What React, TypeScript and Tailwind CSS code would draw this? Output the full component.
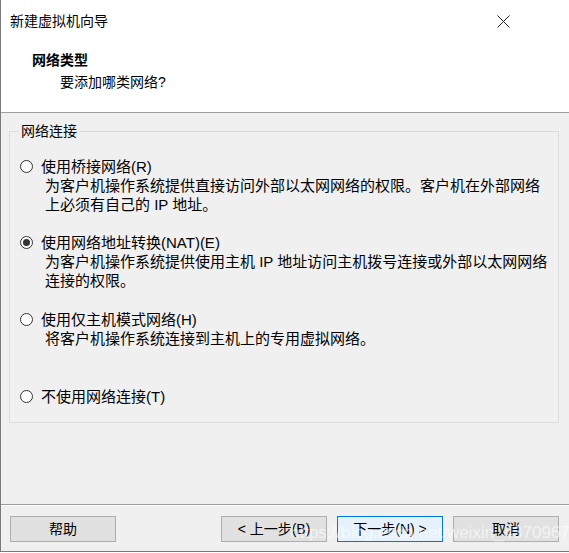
const font = { fontFamily: '"Liberation Sans", "Noto Sans CJK SC", sans-serif' };

const Radio = ({ checked }: { checked?: boolean }) => (
	<span className="relative flex h-[13px] w-[13px] shrink-0 items-center justify-center rounded-full border border-[#333] bg-white">
		{checked && <span className="h-[7px] w-[7px] rounded-full bg-[#333]" />}
	</span>
);

type OptionProps = { label: string; lines?: string[]; checked?: boolean; className?: string };

const Option = ({ label, lines = [], checked, className }: OptionProps) => (
	<div className={className}>
		<div className="flex h-[19px] items-center gap-[8px]">
			<Radio checked={checked} />
			<span className="text-[15px] leading-[19px]">{label}</span>
		</div>
		{lines.map((l) => (
			<div key={l} className="pl-[25px] text-[15px] leading-[19px] whitespace-nowrap">
				{l}
			</div>
		))}
	</div>
);

const Button = ({ label, primary }: { label: string; primary?: boolean }) => (
	<button
		className={
			primary
				? 'h-[26px] w-[106px] border border-[#0078d7] bg-[#e5f1fb] text-[14px] text-black'
				: 'h-[26px] w-[106px] border border-[#adadad] bg-[#e1e1e1] text-[14px] text-black'
		}
	>
		{label}
	</button>
);

export default function App() {
	return (
		<div className="h-[553px] w-[569px] overflow-hidden bg-white text-black" style={font}>
			<div className="relative h-[552px] overflow-hidden border-b border-l border-b-[#7a7a7a] border-l-[#7a7a7a]">
				{/* header */}
				<div className="h-[113px] border-b border-[#a0a0a0] bg-white">
					<div className="flex items-center justify-between pl-[9px] pr-[59px] pt-[11px]">
						<span className="text-[14px] leading-[20px]">新建虚拟机向导</span>
						<svg width="13" height="13" viewBox="0 0 13 13" className="text-[#222]">
							<path d="M0.5 0.5L12.5 12.5M12.5 0.5L0.5 12.5" stroke="currentColor" strokeWidth="1" fill="none" />
						</svg>
					</div>
					<div className="pl-[31px] pt-[19px] text-[14px] font-bold leading-[20px]">网络类型</div>
					<div className="pl-[59px] pt-[2px] text-[14px] leading-[20px]">要添加哪类网络?</div>
				</div>

				{/* body */}
				<div className="h-[391px] bg-[#f0f0f0] pt-[8px]">
					<fieldset className="ml-[8px] mr-[10px] border border-[#dcdcdc] px-[10px] pb-[16px]">
						<legend className="ml-[-1px] px-[2px] text-[14px] leading-[20px]">网络连接</legend>
						<Option
							className="mt-[16px]"
							label="使用桥接网络(R)"
							lines={['为客户机操作系统提供直接访问外部以太网网络的权限。客户机在外部网络', '上必须有自己的 IP 地址。']}
						/>
						<Option
							className="mt-[19px]"
							checked
							label="使用网络地址转换(NAT)(E)"
							lines={['为客户机操作系统提供使用主机 IP 地址访问主机拨号连接或外部以太网网络', '连接的权限。']}
						/>
						<Option className="mt-[20px]" label="使用仅主机模式网络(H)" lines={['将客户机操作系统连接到主机上的专用虚拟网络。']} />
						<Option className="mt-[39px]" label="不使用网络连接(T)" />
					</fieldset>
				</div>

				{/* footer */}
				<div className="h-[47px] border-t border-[#a0a0a0] bg-[#f0f0f0]">
					<div className="h-[1px] bg-white" />
					<div className="flex items-center justify-between pl-[9px] pr-[10px] pt-[10px]">
						<Button label="帮助" />
						<div className="flex gap-[10px]">
							<Button label="< 上一步(B)" />
							<Button label="下一步(N) >" primary />
							<Button label="取消" />
						</div>
					</div>
				</div>

				<span className="pointer-events-none absolute left-[289px] top-[520px] whitespace-nowrap text-[17px] text-white/60">
					https://blog.csdn.net/weixin_43709671
				</span>
			</div>
		</div>
	);
}
